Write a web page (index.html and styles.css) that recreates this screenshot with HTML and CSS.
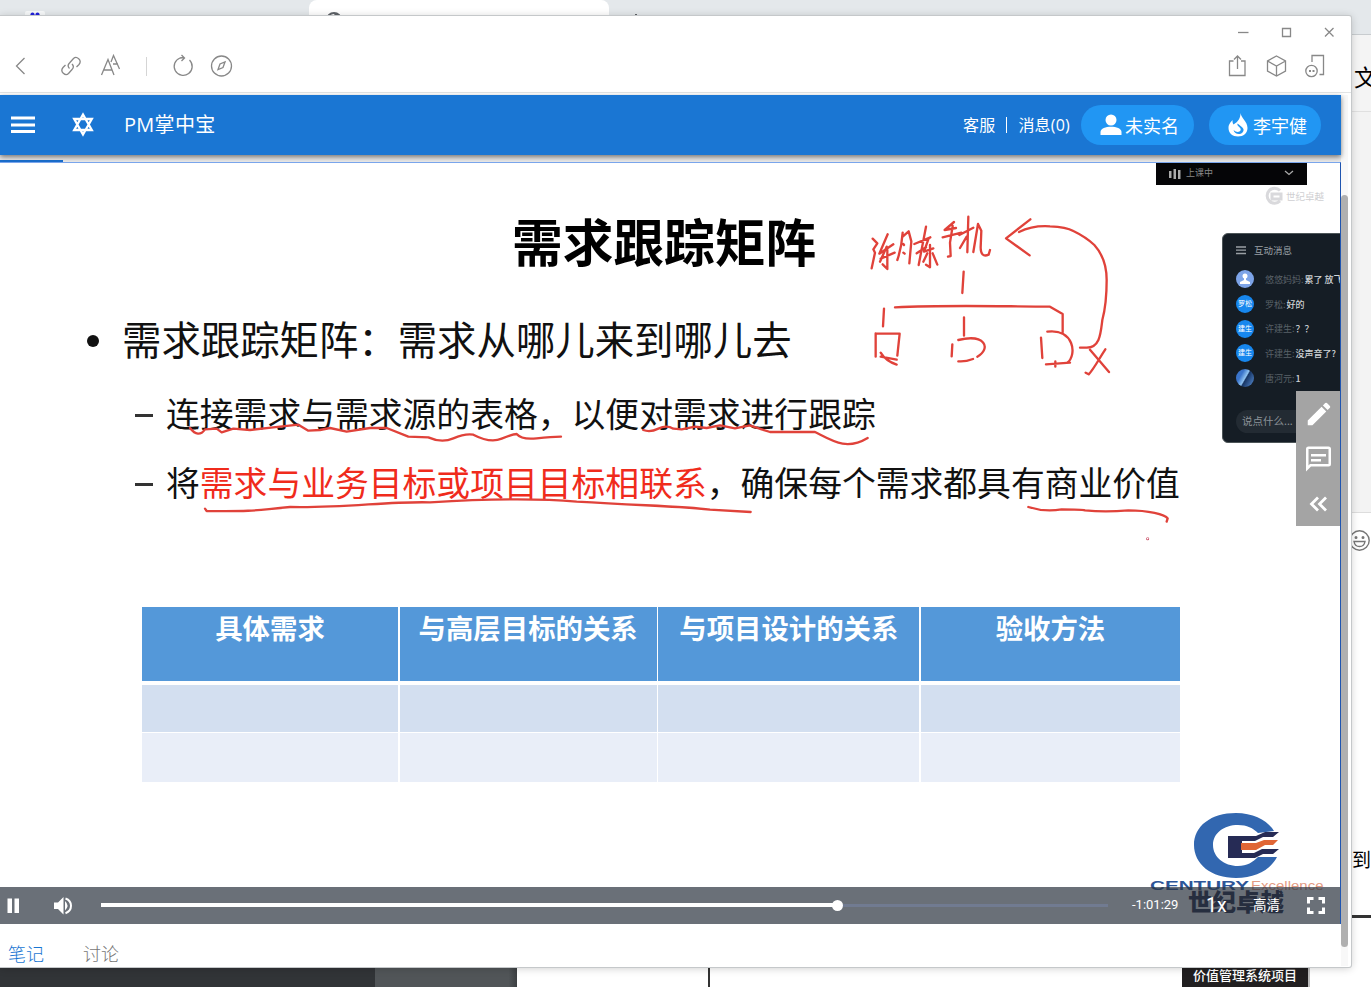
FILE: index.html
```html
<!DOCTYPE html>
<html lang="zh-CN">
<head>
<meta charset="utf-8">
<title>PM掌中宝</title>
<link rel="stylesheet" href="styles.css">
</head>
<body>
<div class="desktop">
  <div class="browser-strip">
    <svg class="favicon" width="20" height="16" viewBox="0 0 20 16"><rect y="11" width="20" height="8" rx="2" fill="#f7f9fa"/><ellipse cx="7.500" cy="15.500" rx="2.200" ry="3" fill="#2222dc"/><ellipse cx="12.500" cy="15.500" rx="2.200" ry="3" fill="#2222dc"/></svg>
    <div class="browser-tab"><svg width="16" height="16" viewBox="0 0 16 16"><circle cx="8" cy="8" r="7" fill="none" stroke="#5f6368" stroke-width="2"/><path d="M8 2l5 0 0 4-3-1z" fill="#5f6368"/></svg></div>
    <span class="plus"></span>
  </div>
  <div class="side-window">
    <div class="side-title">文</div>
    <div class="side-list"></div>
    <div class="side-input"><svg width="22" height="22" viewBox="0 0 22 22" fill="none" stroke="#777" stroke-width="1.4"><circle cx="10.500" cy="10.500" r="9.700"/><path d="M5 11.500h11c-.5 3-2.500 5-5.500 5s-5-2-5.500-5z"/><circle cx="7" cy="7.500" r=".8" fill="#777"/><circle cx="14" cy="7.500" r=".8" fill="#777"/></svg></div>
    <div class="side-word">到</div>
    <div class="side-rule"></div>
  </div>
  <div class="bottom-strip">
    <div class="dark-a"></div><div class="dark-b"></div><div class="paper"><i></i><b>价值管理系统项目</b></div>
  </div>

  <div class="window">
    <div class="chrome">
      <div class="win-buttons">
        <svg width="12" height="12" viewBox="0 0 12 12"><path d="M1 6.500h10.500"/></svg>
        <svg width="12" height="12" viewBox="0 0 12 12"><path d="M2.500 2.500h8v8h-8z"/></svg>
        <svg width="12" height="12" viewBox="0 0 12 12"><path d="M2 2l8.500 8.500M10.500 2L2 10.500"/></svg>
      </div>
      <div class="tools">
        <div class="tools-left">
          <svg width="24" height="24" viewBox="0 0 24 24"><path d="M16.500 4l-8 8 8 8"/></svg>
          <svg class="t-link" width="24" height="24" viewBox="0 0 24 24"><path d="M10.500 14.500c-2-2-1.500-4 0-5.500l4-4.500c3-3 9 1.500 5.500 6l-2.500 2.500M13 10c2 2 1.500 4 0 5.500l-3.500 4c-3 3-9-1.500-5.500-6L6.500 11"/></svg>
          <svg class="t-font" width="24" height="24" viewBox="0 0 24 24"><path d="M2.500 21L9 5.500 15 21M4.500 16h8.500M12 8L14.500 1.500 20.500 15M14 10h5"/></svg>
          <i class="sep"></i>
          <svg class="t-load" width="24" height="24" viewBox="0 0 24 24"><path d="M18.500 6A9 9 0 1 1 9 4L13 3.500M10.500 1l3 3-3 3"/></svg>
          <svg class="t-comp" width="24" height="24" viewBox="0 0 24 24"><circle cx="11.500" cy="12" r="10"/><path d="M15 8l-2 5.500-5 2 2-5.500z"/></svg>
        </div>
        <div class="tools-right">
          <svg width="24" height="24" viewBox="0 0 24 24"><path d="M8.500 7h-4v14.500h15.500V7h-4M12.500 15V2M9 5.500L12.500 2 16 5.500"/></svg>
          <svg width="24" height="24" viewBox="0 0 24 24"><path d="M12.500 2l9 5v10l-9 5-9-5V7zM3.500 7l9 5 9-5M12.500 12v10"/></svg>
          <svg width="24" height="24" viewBox="0 0 24 24"><path d="M9 8V1.500h11.500v19h-4"/><circle cx="8.500" cy="17" r="5.700"/><path d="M6 17h2M9.500 17h2" stroke-width="2"/></svg>
        </div>
      </div>
    </div>

    <div class="view">
      <div class="page">
        <header class="appbar">
          <svg class="menu" width="24" height="18" viewBox="0 0 24 18"><path d="M0 2h24M0 9h24M0 15.500h24" stroke="#fff" stroke-width="2.800"/></svg>
          <svg class="star" width="24" height="26" viewBox="0 0 24 26" fill="none" stroke="#fff" stroke-width="2.300"><path d="M12 2.500l8.800 15.500H3.200zM12 22.500L3.200 7h17.600z"/></svg>
          <h1>PM掌中宝</h1>
          <div class="links"><span>客服</span><i></i><span>消息(0)</span></div>
          <div class="pill pill-a"><svg width="22" height="22" viewBox="0 0 22 22" fill="#fff"><circle cx="11" cy="6" r="5.500"/><path d="M.5 21v-3c0-7 21-7 21 0v3z"/></svg>未实名</div>
          <div class="pill pill-b"><svg width="20" height="24" viewBox="0 0 20 24" fill="#fff"><path fill-rule="evenodd" d="M12.500 0c.5 5 7 8.500 7 15 0 5-4 8.500-9.500 8.500S.5 20 .5 15C.5 11 3 9 4.500 7c0 2 0 3 1 4.500C10.500 8.500 12.500 5 12.500 0zM9.500 10.500C8.500 14 14 14 12.500 17.500c-1 2-4.500 2-7-.5 1 4 6 5.500 9 2.500 3-3.500-.5-5.500-5-9z"/></svg>李宇健</div>
        </header>
        <div class="loading"><i></i></div>

        <main class="video">
          <h2>需求跟踪矩阵</h2>
          <p class="main"><i></i>需求跟踪矩阵：需求从哪儿来到哪儿去</p>
          <p class="sub one"><i></i>连接需求与需求源的表格，以便对需求进行跟踪</p>
          <p class="sub two"><i></i>将<em>需求与业务目标或项目目标相联系</em>，确保每个需求都具有商业价值</p>
          <div class="table">
            <div class="th">具体需求</div><div class="th">与高层目标的关系</div><div class="th">与项目设计的关系</div><div class="th">验收方法</div>
            <div class="r1"></div><div class="r1"></div><div class="r1"></div><div class="r1"></div>
            <div class="r2"></div><div class="r2"></div><div class="r2"></div><div class="r2"></div>
          </div>

          <svg class="ink" width="1340" height="724" viewBox="0 163 1340 724">
            <g transform="translate(850 200) scale(.33333)">
              <path d="M68 116l14 14-12 18 5 10-10 47M113 103l-25 58 42-28M110 140l-20 45M92 176l42-18M112 150v57l-14-14"/>
              <path d="M158 98c-2 30-5 50-16 82M158 110l18-16 8 30-6 66M160 132l2 3M160 158l4 3"/>
              <path d="M228 80l-22 115M193 132l48-20M200 160l28-18M236 115l-14 40 28-10M240 135v67l-12-8M232 160l-12 25M248 160l14 34"/>
              <path d="M312 66l-28 24 34-6M278 112l56-14M308 78l-8 50 2 40-8 2M355 50l-3 107M328 105l42-22M350 110l-20 34M384 72l-14 84M384 72l10 20-2 50q0 32 24 22l4-14"/>
              <path d="M541 58L468 115l71 51M507 96C535 82 570 77 600 79C630 80 655 84 670 93C695 105 715 118 733 135C760 165 770 200 770 240C770 300 765 330 757 360C752 400 750 443 710 443H690"/>
              <path d="M341 215l-4 64M135 322c160-8 300-3 465-2l38 22v55M102 326l-3 53M77 400v70M77 401h72l-7 66M92 458q15 25 48 36M92 470l48 9M342 352v55M307 433l-2 36M325 420c80-20 100 25 57 50M325 484q20 2 44-7M573 413l4 61M592 395c80-10 90 70 60 93M588 493l72-5M616 484v16M720 449l57 67M766 448c-20 30-35 60-50 75l-9-5"/>
            </g>
            <g transform="translate(60 200) scale(.33333)">
              <path d="M390 684Q415 716 435 688L470 686 485 697 520 686 570 690 640 682 715 674 745 692 780 690 810 684 860 695 930 684H980L1045 710 1105 712Q1145 730 1180 715T1240 704Q1290 730 1325 716T1370 702Q1385 720 1430 715T1503 710"/>
              <path d="M435 926l5 7c170 2 150-4 250-12 160 4 300-18 420-14 200-12 350-10 440-2 250 14 330 15 400 24l122 7"/>
            </g>
            <g transform="translate(500 200) scale(.33333)"><path d="M430 690Q450 698 475 686 500 674 520 686L545 688 585 680 620 684 660 676 705 685 750 676 785 688 810 696H945C1000 724 1040 752 1103 714"/></g>
            <g transform="translate(690 450) scale(.33333)"><path d="M1015 171q50 16 100 7 60 0 70 3 60 6 130 0c60 0 110 12 118 24l-3 10"/><circle cx="1373" cy="266" r="1" stroke="#c43b55"/></g>
          </svg>

          <div class="class-bar"><svg width="12" height="10" viewBox="0 0 12 10" fill="#aaa"><path d="M0 2h2.500v7H0zM4.500 0h2.500v10H4.500zM9 1h2.500v9H9z"/></svg><span>上课中</span><svg class="down" width="10" height="6" viewBox="0 0 10 6" fill="none" stroke="#aaa" stroke-width="1.300"><path d="M1 1l4 3.500L9 1"/></svg></div>
          <div class="watermark"><svg width="19" height="20" viewBox="0 0 19 20" fill="none" stroke="#d9d9dc" stroke-width="3"><path d="M16 4.500A7.500 7.500 0 1 0 16 15M8 8h9v5H8z"/></svg>世纪卓越</div>
          <aside class="chat">
            <div class="chat-head"><svg width="10" height="9" viewBox="0 0 10 9" stroke="#9aa0a5" stroke-width="1.300"><path d="M0 1h10M0 4.200h10M0 7.500h10"/></svg>互动消息</div>
            <div class="msg"><i class="person"><svg width="10" height="12" viewBox="0 0 10 12" fill="#fff"><circle cx="5" cy="3" r="2.500"/><path d="M4 5h2v2l4 2v2H0V9l4-2z"/></svg></i><span>悠悠妈妈:<b>累了 放飞</b></span></div>
            <div class="msg"><i>罗松</i><span>罗松:<b>好的</b></span></div>
            <div class="msg"><i>建生</i><span>许建生:<b>？？</b></span></div>
            <div class="msg"><i>建生</i><span>许建生:<b>没声音了?</b></span></div>
            <div class="msg"><i class="photo"></i><span>唐河元:<b>1</b></span></div>
            <div class="say">说点什么...</div>
          </aside>

          <div class="brand">
            <svg width="88" height="68" viewBox="0 0 88 68"><path fill="#3267b0" fill-rule="evenodd" d="M42 1C60 1 74 9 80 19l-16 2C59 16 53 13 44 13c-14 0-25 8-25 20s11 21 25 21c9 0 15-4 20-9h19C77 57 62 66 42 66 17 66 0 52 0 33S17 1 42 1z"/><path fill="#262b55" d="M34 24h28l9-4h14l-6 5H69l-8 4H48v12h12l8-4h17l-6 5H69l-8 4H34z"/><path fill="#e06636" d="M47 31h15l8-3h14l-5 5h-8l-9 5H47z"/></svg>
            <div class="century"><b>CENTURY</b><span>Excellence</span></div>
            <div class="brand-cn">世纪卓越</div>
          </div>

          <div class="side-tools">
            <svg width="30" height="30" viewBox="0 0 24 24" fill="#fff"><path d="M3 17.250V21h3.750L17.810 9.940l-3.750-3.750L3 17.250zM20.710 7.040a1 1 0 0 0 0-1.410l-2.340-2.340a1 1 0 0 0-1.410 0l-1.830 1.830 3.750 3.750z"/></svg>
            <svg width="31" height="30" viewBox="0 0 24 24" fill="#fff"><path d="M4 4h16v12H5.170L4 17.170V4m0-2a2 2 0 0 0-2 2v18l4-4h14a2 2 0 0 0 2-2V4a2 2 0 0 0-2-2H4zm2 10h8v2H6v-2zm0-4h12v2H6V8z"/></svg>
            <svg width="30" height="30" viewBox="0 0 30 30" fill="none" stroke="#fff" stroke-width="2.800"><path d="M14 8.500L7.500 15l6.500 6.500M22 8.500L15.500 15l6.500 6.500"/></svg>
          </div>

          <div class="controls">
            <svg class="pause" width="13" height="16" viewBox="0 0 13 16" fill="#fff"><path d="M.5.500h4.500v14.500H.5zM7.500 .5h4.500v14.500H7.500z"/></svg>
            <svg class="vol" width="19" height="18" viewBox="0 0 19 18"><path d="M0 5.500h4l5.500-5.500v17.500L4 12H0z" fill="#fff"/><path d="M11 4q5 4.500 0 9.500z" fill="#fff"/><path d="M11.500 1.500q5.500 2 5.500 7.300t-5.500 7.400" fill="none" stroke="#fff" stroke-width="2"/></svg>
            <div class="seek"><i style="width:73.1%"></i></div>
            <span class="time">-1:01:29</span><span class="rate">1x</span><span class="hd">高清</span>
            <svg class="full" width="18" height="17" viewBox="0 0 18 17" fill="none" stroke="#fff" stroke-width="3"><path d="M1.500 6.500v-5h5M11.500 1.500h5v5M16.500 10.500v5h-5M6.500 15.500h-5v-5"/></svg>
          </div>
        </main>
        <nav class="tabs"><span class="on">笔记</span><span>讨论</span></nav>
      </div>
      <div class="scroll"><i></i></div>
    </div>
  </div>
</div>
</body>
</html>
```

FILE: styles.css
```css
* { box-sizing: border-box; }
body, h1, h2, p { margin: 0; }
body { font-family: "Noto Sans CJK SC", "Noto Sans", sans-serif; overflow: hidden; }
svg { display: block; flex: none; }
i, em { font-style: normal; }

.desktop { position: relative; width: 1371px; height: 987px; background: #fff; overflow: hidden; }

/* Windows behind the player */
.browser-strip { height: 34px; background: #e4e8eb; display: flex; align-items: flex-start; }
.favicon { margin-left: 25px; }
.browser-tab { margin-left: 264px; width: 300px; height: 34px; border-radius: 8px 8px 0 0; background: #fff; padding: 12px 0 0 17px; }
.plus { width: 2px; height: 10px; margin: 14px 0 0 26px; background: #5f6368; }
.side-window { position: absolute; left: 1340px; top: 34px; width: 31px; height: 933px; border-top: 1px solid #c8cccf; background: #fff; overflow: hidden; }
.side-title { height: 77px; background: #f4f4f4; border-bottom: 1px solid #e0e0e0; padding-left: 14px; font-size: 23px; line-height: 83px; }
.side-list { height: 401px; background: #f3f3f3; border-bottom: 1px solid #ddd; }
.side-input { height: 300px; padding: 17px 0 0 9px; }
.side-word { height: 102px; padding-left: 12px; font-size: 19px; line-height: 91px; }
.side-rule { height: 3px; background: #333; }
.bottom-strip { position: absolute; left: 0; top: 967px; width: 1371px; height: 20px; display: flex; }
.dark-a { width: 375px; background: #313437; }
.dark-b { width: 142px; background: linear-gradient(90deg, #515558 94%, #3c3f42); }
.paper { flex: 1; display: flex; background: #fff; }
.paper i { width: 2px; margin-left: 191px; background: #333; }
.paper b { width: 128px; margin-left: 472px; background: #211f20; border-right: 2px solid #bbb; color: #fff; font-size: 13px; font-weight: 500; line-height: 16px; text-align: center; white-space: nowrap; }

/* Player window */
.window { position: absolute; left: 0; top: 16px; width: 1351px; height: 951px; background: #fff; border-radius: 0 2px 2px 0; box-shadow: 0 0 0 1px #c5c8ca, 0 1px 9px rgba(0,0,0,.22); }
.chrome { height: 77px; border-bottom: 1px solid #e2e4e5; }
.chrome svg { fill: none; stroke: #888; stroke-width: 1.3; }
.win-buttons { height: 32px; padding: 10px 16px 0 0; display: flex; justify-content: flex-end; gap: 31px; }
.tools { display: flex; justify-content: space-between; padding: 6px 24px 0 8px; }
.tools-left, .tools-right { display: flex; align-items: center; }
.tools-right { gap: 15px; }
.t-link { margin-left: 27px; }
.t-font { margin-left: 16px; }
.sep { width: 1px; height: 19px; margin-left: 23px; background: #d5d5d5; }
.t-load { margin-left: 24px; }
.t-comp { margin-left: 15px; }

.view { display: flex; margin-top: 2px; height: 871px; }
.page { width: 1341px; height: 871px; }
.scroll { width: 7px; background: #f8f8f8; }
.scroll i { display: block; height: 752px; margin-top: 100px; border-radius: 4px; background: #b0b0b0; }

.appbar { position: relative; z-index: 1; height: 60px; display: flex; align-items: center; padding: 0 20px 0 11px; background: #1a76d3; color: #fff; box-shadow: 0 2px 5px rgba(0,0,0,.5); }
.star { margin-left: 36px; }
.appbar h1 { margin-left: 29px; font: 400 20px/58px "Open Sans", "Noto Sans CJK SC", sans-serif; letter-spacing: .3px; }
.links { margin-left: auto; display: flex; align-items: center; font: 16px/58px "Open Sans", "Noto Sans CJK SC", sans-serif; letter-spacing: .2px; }
.links i { width: 1px; height: 16px; margin: 0 11px; background: #fff; }
.pill { display: flex; align-items: center; height: 40px; border-radius: 20px; background: #2196f3; font-size: 18px; line-height: 40px; white-space: nowrap; }
.pill-a { width: 113px; margin-left: 11px; padding-left: 19px; gap: 3px; }
.pill-b { width: 112px; margin-left: 15px; padding-left: 19px; gap: 5px; }
.loading { height: 7px; padding-top: 5px; background: #e9e9e9; }
.loading i { display: block; width: 63px; height: 2px; background: #1a6fcf; }

.video { position: relative; height: 762px; padding-top: 47px; border-top: 1px solid #7aa7ee; border-right: 1px solid #1f55b0; overflow: hidden; color: #111; }
.video h2 { height: 60px; padding-left: 512px; font-size: 50.7px; line-height: 60px; font-weight: 700; color: #000; white-space: nowrap; }
.main, .sub { display: flex; align-items: center; white-space: nowrap; }
.main { margin-top: 44px; padding-left: 87px; height: 48px; font-size: 39.4px; line-height: 48px; }
.main i { width: 12px; height: 12px; margin: 6px 23px 0 0; border-radius: 50%; background: #111; }
.sub { height: 40px; padding-left: 135px; font-size: 33.8px; line-height: 40px; }
.sub i { width: 18px; height: 3px; margin: 4px 13px 0 0; background: #333; }
.one { margin-top: 31px; }
.two { margin-top: 29px; }
.sub em { color: #f02b1c; }
.table { margin: 105px 0 0 142px; width: 1038px; display: grid; grid-template-columns: 256px 257px 261px 259px; grid-template-rows: 74px 47px 49px; column-gap: 1.67px; row-gap: 1px; }
.th { background: #5498d9; color: #fff; font-size: 27.4px; line-height: 41px; font-weight: 700; text-align: center; white-space: nowrap; }
.r1 { background: #d3dff0; margin-top: 3px; margin-bottom: -3px; }
.r2 { background: #e9eef8; margin-top: 3px; margin-bottom: -3px; }
.ink { position: absolute; left: 0; top: 0; fill: none; stroke: #e0423a; stroke-width: 7; stroke-linecap: round; stroke-linejoin: round; }

/* Shared class overlay */
.class-bar { position: absolute; left: 1156px; top: 0; width: 151px; height: 22px; padding: 0 13px; display: flex; align-items: center; gap: 5px; background: #050507; color: #888; font-size: 9px; line-height: 19px; }
.class-bar span { margin-top: -3px; }
.down { margin-left: auto; margin-top: -2px; }
.watermark { position: absolute; left: 1264px; top: 23px; display: flex; align-items: center; gap: 3px; font-size: 9.5px; line-height: 20px; color: #cfcfd2; white-space: nowrap; }
.chat { position: absolute; left: 1222px; top: 70px; width: 140px; height: 210px; padding: 3px 0 0 13px; border: 1px solid #4d5558; border-radius: 6px; background: #151d25; color: #596168; font-size: 9.5px; white-space: nowrap; }
.chat-head { display: flex; align-items: center; gap: 8px; height: 26px; line-height: 24px; color: #9aa0a5; }
.msg { display: flex; align-items: center; gap: 11px; height: 24.7px; }
.msg:nth-child(2) { margin-top: 4px; }
.msg i { width: 18px; height: 18px; border-radius: 50%; background: #1787ee; color: #fff; font-size: 7px; line-height: 17px; text-align: center; }
.msg .person { background: #7da4e8; padding: 3px 4px; }
.msg .photo { background: linear-gradient(120deg, #3a74ca 30%, #8fc3f1 50%, #173564 55%, #5a91d8); }
.msg span { font-size: 9px; }
.msg b { margin-left: 1px; color: #d0d4d7; font-weight: 500; }
.say { height: 23px; margin: 20px 0 0; padding-left: 6px; border-radius: 12px; background: #232b33; color: #8b9298; font-size: 10.5px; line-height: 22px; }
.brand { position: absolute; left: 1150px; top: 649px; width: 174px; white-space: nowrap; }
.brand svg { margin-left: 44px; }
.century { display: flex; align-items: center; height: 12px; font-family: "Liberation Sans", sans-serif; line-height: 12px; }
.century b { width: 101px; font-size: 12.5px; color: #2c5598; transform: scaleX(1.65); transform-origin: left; }
.century span { font-size: 12.5px; color: #e39b84; transform: scaleX(1.2); transform-origin: left; }
.brand-cn { margin-left: 38px; font-size: 24px; line-height: 17px; font-weight: 900; color: #1c2340; }
.side-tools { position: absolute; right: -1px; top: 228px; width: 45px; height: 135px; display: grid; grid-template-rows: repeat(3, 45px); place-items: center; background: #a4a4a4; }

.controls { position: absolute; left: 0; right: 0; bottom: 0; height: 37px; display: flex; align-items: center; padding: 0 14px 0 7px; background: rgba(43,51,63,.7); color: #fff; }
.vol { margin-left: 34px; }
.seek { width: 1007px; height: 3px; margin: -1px 0 0 28px; background: #717b91; display: flex; align-items: center; }
.seek i { display: flex; align-items: center; justify-content: flex-end; height: 4px; flex: none; background: #fff; }
.seek i::after { content: ""; width: 11px; height: 11px; margin-right: -6px; border-radius: 50%; background: #fff; flex: none; }
.time { width: 74px; margin: -3px 0 0 24px; font: 13px/37px Roboto, sans-serif; }
.rate { width: 47px; font: 19.5px/38px Roboto, sans-serif; }
.hd { width: 54px; font-size: 13.5px; line-height: 30px; margin-top: -4px; }
.full { flex: none; }
.tabs { display: flex; gap: 39px; padding-left: 8px; height: 42px; overflow: hidden; font-size: 18px; line-height: 59px; font-weight: 300; color: #777; }
.tabs .on { color: #1976d2; }
```
